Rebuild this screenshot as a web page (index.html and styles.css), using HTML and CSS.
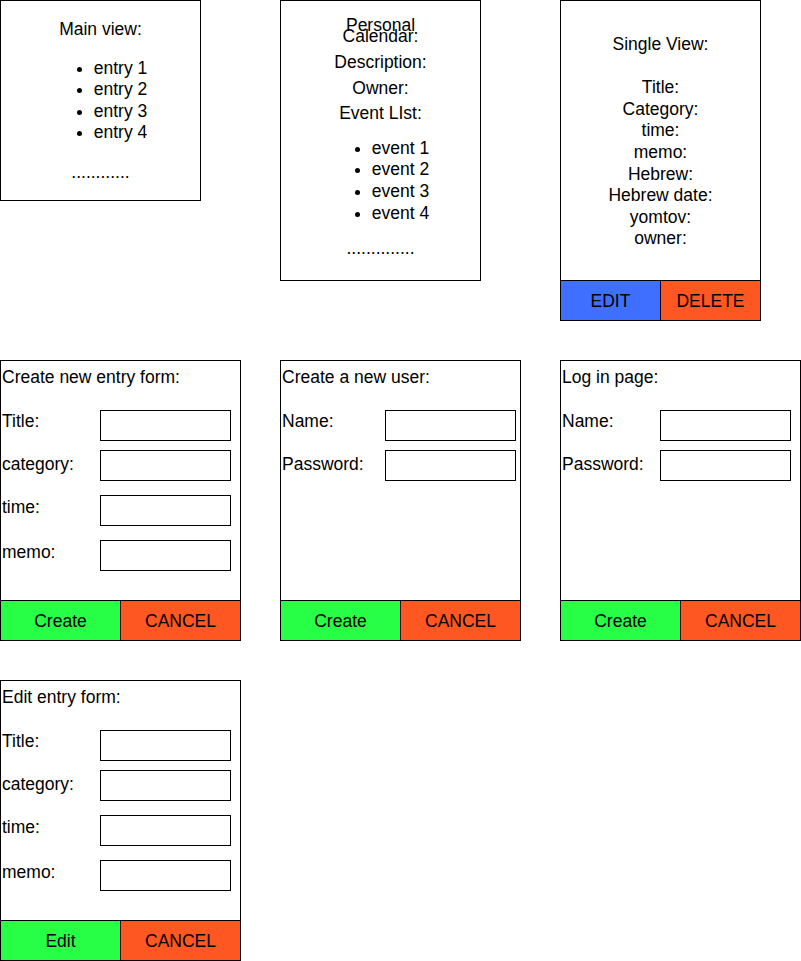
FILE: index.html
```html
<!DOCTYPE html>
<html lang="en">
<head>
    <meta charset="UTF-8">
    <title>Calendar app mockups</title>
    <link rel="stylesheet" href="styles.css">
</head>
<body>

<div class="board">

    <!-- Main view -->
    <div class="card main-view">
        <div class="line">Main view:</div>
        <ul class="list">
            <li>entry 1</li>
            <li>entry 2</li>
            <li>entry 3</li>
            <li>entry 4</li>
        </ul>
        <div class="line">............</div>
    </div>

    <!-- Personal calendar -->
    <div class="card calendar-view">
        <div class="cal-title">Personal Calendar:</div>
        <div class="cal-line">Description:</div>
        <div class="cal-line">Owner:</div>
        <div class="cal-line">Event LIst:</div>
        <ul class="list events">
            <li>event 1</li>
            <li>event 2</li>
            <li>event 3</li>
            <li>event 4</li>
        </ul>
        <div class="line">..............</div>
    </div>

    <!-- Single view -->
    <div class="card single-view">
        <div class="card-body single-body">
            Single View:<br>
            <br>
            Title:<br>
            Category:<br>
            time:<br>
            memo:<br>
            Hebrew:<br>
            Hebrew date:<br>
            yomtov:<br>
            owner:
        </div>
        <div class="actions">
            <div class="btn btn-blue">EDIT</div>
            <div class="btn btn-red">DELETE</div>
        </div>
    </div>

    <!-- Create new entry -->
    <div class="card form-card">
        <div class="card-body">
            <div class="form-title">Create new entry form:</div>
            <div class="field"><label>Title:</label><input type="text"></div>
            <div class="field"><label class="low">category:</label><input type="text"></div>
            <div class="field spaced"><label>time:</label><input type="text"></div>
            <div class="field spaced"><label>memo:</label><input type="text"></div>
        </div>
        <div class="actions">
            <div class="btn btn-green">Create</div>
            <div class="btn btn-red">CANCEL</div>
        </div>
    </div>

    <!-- Create user -->
    <div class="card form-card user-form">
        <div class="card-body">
            <div class="form-title">Create a new user:</div>
            <div class="field"><label>Name:</label><input type="text"></div>
            <div class="field"><label class="low">Password:</label><input type="password"></div>
        </div>
        <div class="actions">
            <div class="btn btn-green">Create</div>
            <div class="btn btn-red">CANCEL</div>
        </div>
    </div>

    <!-- Log in -->
    <div class="card form-card">
        <div class="card-body">
            <div class="form-title">Log in page:</div>
            <div class="field"><label>Name:</label><input type="text"></div>
            <div class="field"><label class="low">Password:</label><input type="password"></div>
        </div>
        <div class="actions">
            <div class="btn btn-green">Create</div>
            <div class="btn btn-red">CANCEL</div>
        </div>
    </div>

    <!-- Edit entry -->
    <div class="card form-card">
        <div class="card-body">
            <div class="form-title">Edit entry form:</div>
            <div class="field"><label>Title:</label><input type="text"></div>
            <div class="field"><label class="low">category:</label><input type="text"></div>
            <div class="field spaced"><label>time:</label><input type="text"></div>
            <div class="field spaced"><label>memo:</label><input type="text"></div>
        </div>
        <div class="actions">
            <div class="btn btn-green">Edit</div>
            <div class="btn btn-red">CANCEL</div>
        </div>
    </div>

</div>

</body>
</html>
```

FILE: styles.css
```css
body {
    margin: 0;
    padding: 0;
    background-color: #ffffff;
    font-family: 'Liberation Sans', Arial, sans-serif;
    font-size: 17.5px;
    line-height: 21.6px;
    color: #000;
}

.board {
    display: grid;
    grid-template-columns: repeat(3, 241px);
    column-gap: 39px;
    row-gap: 39px;
    align-items: start;
}

.card {
    box-sizing: border-box;
    border: 1px solid #000;
    background-color: #fff;
    display: flex;
    flex-direction: column;
}

.card-body {
    flex: 1;
}

/* Main view */
.main-view {
    width: 201px;
    height: 201px;
    padding-top: 18px;
    text-align: center;
}

.line {
    text-align: center;
}

.list {
    width: fit-content;
    margin: 17px auto 18px;
    padding-left: 40px;
    text-align: left;
}

/* Personal calendar */
.calendar-view {
    width: 201px;
    height: 281px;
    padding-top: 19px;
    text-align: center;
}

.cal-title {
    max-width: 90px;
    margin: 0 auto 8px;
    line-height: 11px;
}

.cal-line {
    line-height: 25.6px;
}

.events {
    margin: 11px auto 14px;
}

/* Single view */
.single-view {
    width: 201px;
    height: 321px;
}

.single-body {
    padding-top: 33px;
    text-align: center;
}

/* Buttons */
.actions {
    display: flex;
    height: 40px;
    box-sizing: border-box;
    border-top: 1px solid #000;
}

.btn {
    flex: 1 1 0;
    display: flex;
    align-items: center;
    justify-content: center;
    padding-top: 2px;
}

.btn + .btn {
    border-left: 1px solid #000;
}

.btn-blue {
    background-color: #3f6fff;
}

.btn-red {
    background-color: #ff5722;
}

.btn-green {
    background-color: #26ff46;
}

/* Forms */
.form-card {
    height: 281px;
}

.form-card .card-body {
    padding: 6px 0 0 1px;
}

.form-title {
    margin-bottom: 21px;
}

.field {
    display: flex;
    align-items: flex-start;
    margin-bottom: 9px;
}

.field.spaced {
    margin-top: 14px;
}

.field label {
    width: 98px;
    padding-top: 1px;
}

.field.spaced label {
    padding-top: 2px;
}

.field label.low {
    padding-top: 4px;
}

.user-form .field label {
    width: 103px;
}

.field input {
    box-sizing: border-box;
    width: 131px;
    height: 31px;
    margin: 0;
    padding: 0 4px;
    border: 1px solid #000;
    border-radius: 0;
    font: inherit;
    background: #fff;
}
```
